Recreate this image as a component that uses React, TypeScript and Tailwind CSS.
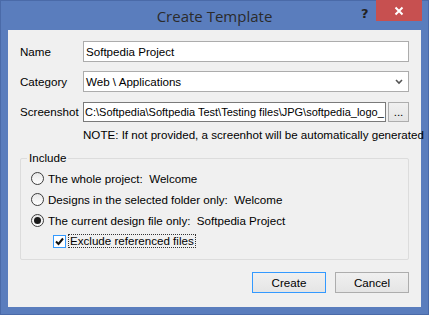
import React from "react";

const font = { fontFamily: '"Liberation Sans", Arial, sans-serif' };

function Radio({ checked, label }: { checked?: boolean; label: string }) {
  return (
    <div className="flex items-center h-[21px]">
      <div className="w-[13px] h-[13px] rounded-full border border-[#3c3c3c] bg-gradient-to-b from-[#e8e8e8] to-white flex items-center justify-center">
        {checked && <div className="w-[7px] h-[7px] rounded-full bg-[#1a1a1a]" />}
      </div>
      <span className="ml-[4px] text-black whitespace-pre">{label}</span>
    </div>
  );
}

export default function App() {
  return (
    <div className="w-[429px] h-[315px] bg-[#5a7dbd] border border-[#4a6aa8] flex flex-col" style={font}>
      <div className="relative h-[29px] shrink-0">
        <div className="absolute inset-x-0 top-[4px] text-center text-[15px] text-[#2b2b2b]" style={{ fontFamily: '"Open Sans", "Noto Sans", sans-serif' }}>
          Create Template
        </div>
        <div className="absolute left-[360px] top-[3px] text-[13px] font-bold text-[#222]" style={{ fontFamily: '"DejaVu Sans", sans-serif' }}>?</div>
        <div className="absolute right-[6px] top-[-1px] w-[46px] h-[21px] bg-[#c75050] flex items-center justify-center">
          <svg width="10" height="10" viewBox="0 0 10 10">
            <path d="M1.5 1.5 L8.5 8.5 M8.5 1.5 L1.5 8.5" stroke="white" strokeWidth="2" />
          </svg>
        </div>
      </div>
      <div className="mx-[7px] mb-[7px] flex-1 bg-[#f0f0f0] px-[12px] pt-[11px] text-[11.6px] text-black flex flex-col">
        <div className="flex items-center h-[21px]">
          <span className="w-[63px]">Name</span>
          <div className="flex-1 h-[21px] bg-white border border-[#acacac] flex items-center px-[2px]">Softpedia Project</div>
        </div>
        <div className="flex items-center h-[21px] mt-[9px]">
          <span className="w-[63px]">Category</span>
          <div className="flex-1 h-[21px] bg-white border border-[#acacac] flex items-center px-[2px] justify-between">
            <span>Web \ Applications</span>
            <svg width="8" height="6" viewBox="0 0 8 6" className="mr-[3px]">
              <path d="M1 1 L4 4 L7 1" stroke="#555" strokeWidth="1.6" fill="none" />
            </svg>
          </div>
        </div>
        <div className="flex items-center h-[20px] mt-[10px]">
          <span className="w-[63px]">Screenshot</span>
          <div className="flex-1 min-w-0 h-[20px] bg-white border border-[#7a7a7a] flex items-center px-[1px] overflow-hidden whitespace-nowrap text-[11px]">
            C:\Softpedia\Softpedia Test\Testing files\JPG\softpedia_logo_
          </div>
          <div className="ml-[2px] shrink-0 w-[21px] h-[20px] border border-[#adadad] bg-gradient-to-b from-[#f0f0f0] to-[#e5e5e5] flex items-center justify-center">...</div>
        </div>
        <div className="ml-[63px] mt-[6px] h-[14px] leading-[14px] whitespace-nowrap">
          NOTE: If not provided, a screenhot will be automatically generated
        </div>
        <div className="relative mt-[16px] h-[102px] border border-[#dcdcdc] rounded-[2px] px-[10px] pt-[9px]">
          <span className="absolute left-[6px] top-[-8px] bg-[#f0f0f0] px-[2px] leading-[14px]">Include</span>
          <Radio label="The whole project:  Welcome" />
          <Radio label="Designs in the selected folder only:  Welcome" />
          <Radio checked label="The current design file only:  Softpedia Project" />
          <div className="flex items-center h-[20px] ml-[22px]">
            <div className="w-[13px] h-[13px] border border-[#3399ff] bg-white flex items-center justify-center">
              <svg width="9" height="9" viewBox="0 0 9 9">
                <path d="M1 4.5 L3.5 7 L8 1.5" stroke="#111" strokeWidth="2" fill="none" />
              </svg>
            </div>
            <span className="ml-[2px] px-[1px] border border-dotted border-[#333] leading-[12px]">Exclude referenced files</span>
          </div>
        </div>
        <div className="flex justify-end gap-[9px] mt-[12px]">
          <div className="w-[74px] h-[21px] border border-[#3399ff] bg-gradient-to-b from-[#f0f0f0] to-[#e5e5e5] flex items-center justify-center">Create</div>
          <div className="w-[74px] h-[21px] border border-[#adadad] bg-gradient-to-b from-[#f0f0f0] to-[#e5e5e5] flex items-center justify-center">Cancel</div>
        </div>
      </div>
    </div>
  );
}
